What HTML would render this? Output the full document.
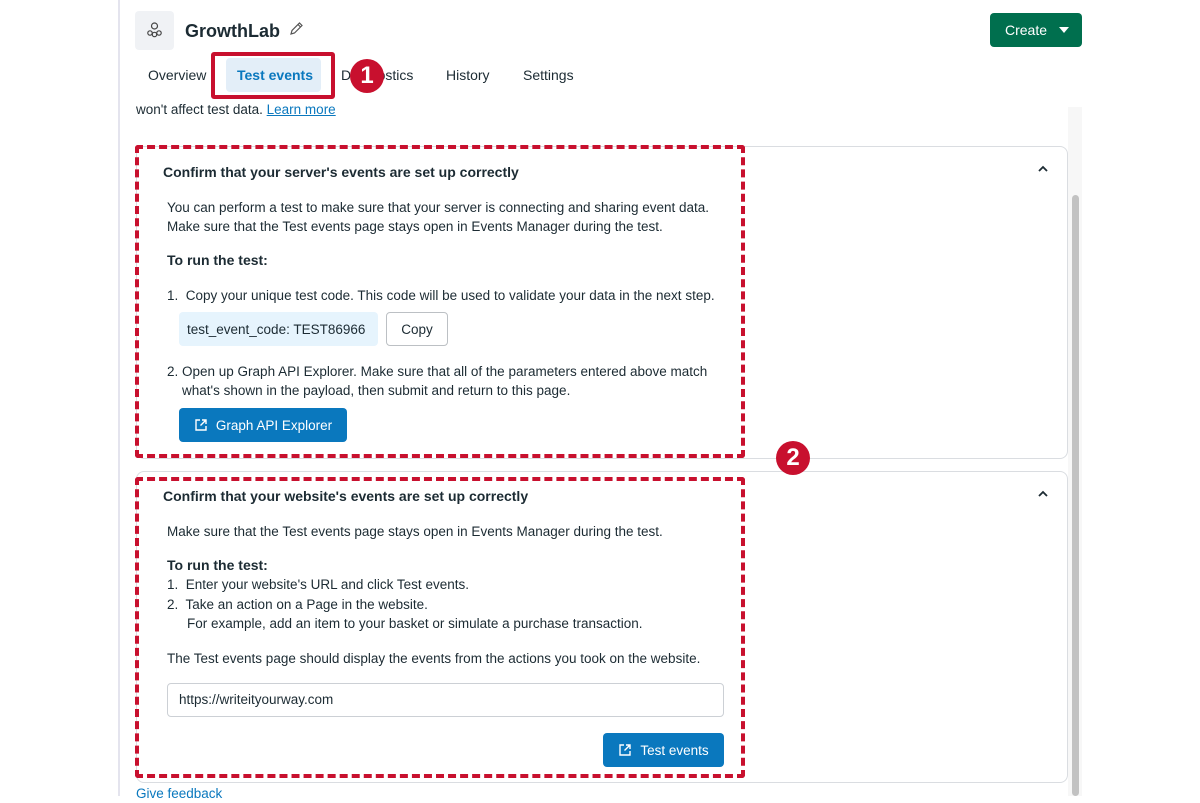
<!DOCTYPE html>
<html><head><meta charset="utf-8"><style>
*{box-sizing:border-box;margin:0;padding:0}
body{width:1200px;height:796px;overflow:hidden;background:#fff;font-family:"Liberation Sans",sans-serif;color:#1c2b33;position:relative;font-size:13.5px}
.a{position:absolute}
.card{position:absolute;left:136px;width:932px;border:1px solid #dadde1;border-radius:8px;background:#fff}
.dash{position:absolute;border:4px dashed #c8102e;border-radius:3px}
.t{position:absolute;white-space:nowrap;font-size:13.5px;line-height:19px}
.b{font-weight:bold}
.btn{position:absolute;background:#0a78be;color:#fff;border-radius:4px;font-size:13.5px;display:flex;align-items:center;justify-content:center;gap:8px}
.badge{position:absolute;width:34px;height:34px;border-radius:50%;background:#c8102e;color:#fff;font-weight:bold;font-size:24px;display:flex;align-items:center;justify-content:center}
</style></head><body>
<div class="a" style="left:118px;top:0;width:2px;height:796px;background:#e4e4ee"></div>
<div class="a" style="left:1068px;top:107px;width:14px;height:689px;background:#f7f7f7"></div>
<div class="a" style="left:1072px;top:195px;width:7px;height:601px;background:#c2c2c2;border-radius:4px"></div>

<div class="a" style="left:135px;top:11px;width:39px;height:39px;background:#f0f2f5;border-radius:4px"></div>
<svg class="a" style="left:145px;top:21px" width="19" height="19" viewBox="0 0 19 19" fill="none" stroke="#444" stroke-width="1.2"><circle cx="9.5" cy="5" r="3"/><circle cx="5" cy="12" r="2.2"/><circle cx="9.5" cy="13.5" r="2.2"/><circle cx="14" cy="12" r="2.2"/></svg>
<div class="t b" style="left:185px;top:20px;font-size:18px;line-height:22px">GrowthLab</div>
<svg class="a" style="left:289px;top:21px" width="15" height="15" viewBox="0 0 15 15" fill="none" stroke="#555" stroke-width="1.2"><path d="M2 13l1-3.5L10.5 2l2.5 2.5L5.5 12z M9 3.5l2.5 2.5"/></svg>
<div class="a" style="left:990px;top:13px;width:92px;height:34px;background:#006f4e;border-radius:4px;color:#fff;font-size:14px;display:flex;align-items:center;padding-left:15px">Create<span style="margin-left:12px;border-left:5px solid transparent;border-right:5px solid transparent;border-top:6px solid #fff"></span></div>

<div class="t" style="left:148px;top:66px;font-size:14px">Overview</div>
<div class="a" style="left:226px;top:58px;width:95px;height:34px;background:#e3eef8;border-radius:4px"></div>
<div class="t b" style="left:237px;top:66px;font-size:14px;color:#0a78be">Test events</div>
<div class="t" style="left:341px;top:66px;font-size:14px">Diagnostics</div>
<div class="t" style="left:446px;top:66px;font-size:14px">History</div>
<div class="t" style="left:523px;top:66px;font-size:14px">Settings</div>
<div class="a" style="left:211px;top:52px;width:124px;height:47px;border:4px solid #c8102e;border-radius:3px"></div>
<div class="badge" style="left:350px;top:59px">1</div>

<div class="t" style="left:136px;top:100px">won't affect test data. <span style="color:#0a78be;text-decoration:underline">Learn more</span></div>

<div class="card" style="top:146px;height:313px"></div>
<div class="card" style="top:471px;height:312px"></div>
<svg class="a" style="left:1036px;top:164px" width="14" height="10"><path d="M3 7l4-4 4 4" fill="none" stroke="#1c2b33" stroke-width="1.8"/></svg>
<svg class="a" style="left:1036px;top:489px" width="14" height="10"><path d="M3 7l4-4 4 4" fill="none" stroke="#1c2b33" stroke-width="1.8"/></svg>

<div class="t b" style="left:163px;top:163px;font-size:14px">Confirm that your server's events are set up correctly</div>
<div class="t" style="left:167px;top:198px">You can perform a test to make sure that your server is connecting and sharing event data.</div>
<div class="t" style="left:167px;top:217px">Make sure that the Test events page stays open in Events Manager during the test.</div>
<div class="t b" style="left:167px;top:251px;font-size:14px">To run the test:</div>
<div class="t" style="left:167px;top:286px">1.&nbsp; Copy your unique test code. This code will be used to validate your data in the next step.</div>
<div class="a" style="left:179px;top:312px;width:199px;height:34px;background:#e6f4fd;border-radius:4px"></div>
<div class="t" style="left:187px;top:320px">test_event_code: TEST86966</div>
<div class="a" style="left:386px;top:312px;width:62px;height:34px;border:1px solid #bcc0c4;border-radius:4px;display:flex;align-items:center;justify-content:center">Copy</div>
<div class="t" style="left:167px;top:362px">2. Open up Graph API Explorer. Make sure that all of the parameters entered above match</div>
<div class="t" style="left:182px;top:381px">what's shown in the payload, then submit and return to this page.</div>
<div class="btn" style="left:179px;top:408px;width:168px;height:34px"><svg width="14" height="14" viewBox="0 0 14 14" fill="none" stroke="#fff" stroke-width="1.4"><path d="M6 2H2v10h10V8M8 2h4v4M12 2L6.5 7.5"/></svg>Graph API Explorer</div>

<div class="t b" style="left:163px;top:487px;font-size:14px">Confirm that your website's events are set up correctly</div>
<div class="t" style="left:167px;top:522px">Make sure that the Test events page stays open in Events Manager during the test.</div>
<div class="t b" style="left:167px;top:556px;font-size:14px">To run the test:</div>
<div class="t" style="left:167px;top:575px">1.&nbsp; Enter your website's URL and click Test events.</div>
<div class="t" style="left:167px;top:595px">2.&nbsp; Take an action on a Page in the website.</div>
<div class="t" style="left:187px;top:614px">For example, add an item to your basket or simulate a purchase transaction.</div>
<div class="t" style="left:167px;top:649px">The Test events page should display the events from the actions you took on the website.</div>
<div class="a" style="left:167px;top:683px;width:557px;height:34px;border:1px solid #ccd0d5;border-radius:4px;padding:8px 11px">https://writeityourway.com</div>
<div class="btn" style="left:603px;top:733px;width:121px;height:34px"><svg width="14" height="14" viewBox="0 0 14 14" fill="none" stroke="#fff" stroke-width="1.4"><path d="M6 2H2v10h10V8M8 2h4v4M12 2L6.5 7.5"/></svg>Test events</div>

<div class="dash" style="left:135px;top:145px;width:610px;height:313px"></div>
<div class="dash" style="left:135px;top:477px;width:610px;height:301px"></div>
<div class="badge" style="left:776px;top:441px">2</div>
<div class="t" style="left:136px;top:784px;color:#0a78be">Give feedback</div>
</body></html>
